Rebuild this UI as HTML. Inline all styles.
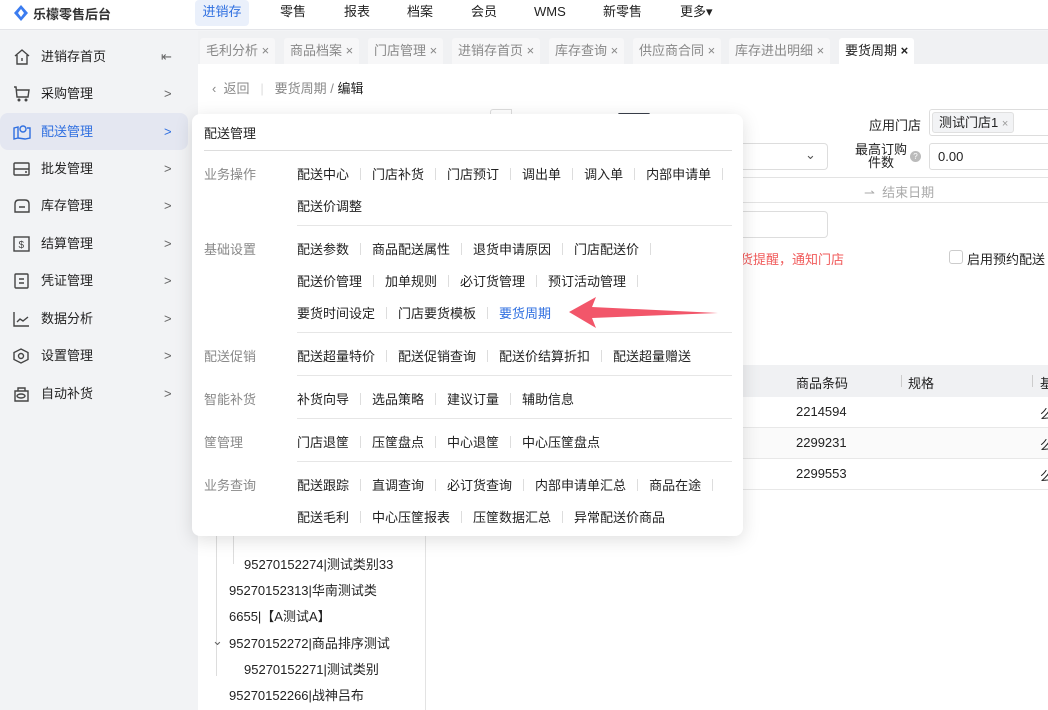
<!DOCTYPE html>
<html><head><meta charset="utf-8"><style>
*{margin:0;padding:0;box-sizing:border-box}
body{width:1048px;height:710px;overflow:hidden;background:#f3f4f6;font-family:"Liberation Sans","Noto Sans CJK SC",sans-serif;font-size:13px;color:#222;position:relative}
.abs{position:absolute}
.hdr{left:0;top:0;width:1048px;height:30px;background:#fff;border-bottom:1px solid #e3e4e8}
.nav{top:0;height:26px;line-height:24px;font-size:13px;color:#222}
.side{left:0;top:31px;width:198px;height:679px;background:#f2f3f5}
.si{left:0;width:188px;height:37px;line-height:37px;font-size:13px;color:#222}
.si .t{position:absolute;left:41px}
.si .ar{position:absolute;left:164px;color:#666;font-size:13px}
.si svg{position:absolute;left:13px;top:11px}
.tabs{left:198px;top:31px;width:850px;height:33px;background:#f0f1f3}
.tab{top:38px;height:26px;line-height:26px;background:#f7f7f8;color:#888;font-size:13px;padding:0 6px;border-radius:3px 3px 0 0}
.main{left:198px;top:64px;width:850px;height:646px;background:#fff}
.pop{left:192px;top:114px;width:551px;height:422px;background:#fff;border-radius:8px;box-shadow:0 4px 18px rgba(0,0,0,.13)}
.lab{left:12px;color:#888;font-size:13px}
.row{left:105px;font-size:13px;color:#222;white-space:nowrap}
.row span{display:inline-block}
.row i{display:inline-block;width:1px;height:12px;background:#ddd;margin:0 11px;vertical-align:-1px}
.sep{left:105px;width:435px;height:1px;background:#e6e6e6}
.tr{font-size:13px;color:#222;white-space:nowrap}
</style></head><body>
<div class="abs hdr"></div>
<svg class="abs" style="left:13px;top:4px" width="16" height="18" viewBox="0 0 16 18"><path d="M8 1 L15 9 L8 17 L1 9Z" fill="#3b7cf0"/><path d="M8 5 L11 9 L8 13 L5 9Z" fill="#fff"/></svg>
<div class="abs" style="left:33px;top:4px;font-size:13px;font-weight:bold;color:#333">乐檬零售后台</div>
<div class="abs nav" style="left:195px;width:54px;background:#eaf0fb;border-radius:4px;color:#2f6fe0;text-align:center">进销存</div>
<div class="abs nav" style="left:280px">零售</div>
<div class="abs nav" style="left:344px">报表</div>
<div class="abs nav" style="left:407px">档案</div>
<div class="abs nav" style="left:471px">会员</div>
<div class="abs nav" style="left:534px">WMS</div>
<div class="abs nav" style="left:603px">新零售</div>
<div class="abs nav" style="left:680px">更多▾</div>

<div class="abs side"></div>
<div class="abs si" style="top:38px"><svg width="18" height="16" viewBox="0 0 18 16" fill="none" stroke="#444" stroke-width="1.4"><path d="M2 7 L9 1 L16 7 M4 6 V15 H14 V6 M9 9 V12"/></svg><span class="t">进销存首页</span><span class="ar" style="left:161px">⇤</span></div>
<div class="abs si" style="top:75px"><svg width="18" height="16" viewBox="0 0 18 16" fill="none" stroke="#444" stroke-width="1.4"><path d="M1 1 H3 L4 11 H15 L16 4 H4"/><circle cx="6" cy="14" r=".8"/><circle cx="13" cy="14" r=".8"/></svg><span class="t">采购管理</span><span class="ar">&gt;</span></div>
<div class="abs si" style="top:113px;background:#e4e7f1;border-radius:8px;color:#2f6fe0"><svg width="18" height="16" viewBox="0 0 18 16" fill="none" stroke="#2f6fe0" stroke-width="1.4"><path d="M1 4 L5 3 V14 L1 15Z M5 14 L12 15 L17 14 V4 L14 4"/><circle cx="10" cy="5" r="3"/></svg><span class="t">配送管理</span><span class="ar" style="color:#2f6fe0">&gt;</span></div>
<div class="abs si" style="top:150px"><svg width="18" height="16" viewBox="0 0 18 16" fill="none" stroke="#444" stroke-width="1.4"><rect x="1" y="2" width="15" height="12" rx="1"/><path d="M1 8 H16 M12 11 H14"/></svg><span class="t">批发管理</span><span class="ar">&gt;</span></div>
<div class="abs si" style="top:187px"><svg width="18" height="16" viewBox="0 0 18 16" fill="none" stroke="#444" stroke-width="1.4"><path d="M2 6 Q2 2 6 2 H12 Q16 2 16 6 V14 H2Z M6 9 H12"/></svg><span class="t">库存管理</span><span class="ar">&gt;</span></div>
<div class="abs si" style="top:225px"><svg width="18" height="16" viewBox="0 0 18 16" fill="none" stroke="#444" stroke-width="1.4"><rect x="1" y="1" width="15" height="14"/><text x="5.5" y="12" font-size="10" fill="#444" stroke="none">$</text></svg><span class="t">结算管理</span><span class="ar">&gt;</span></div>
<div class="abs si" style="top:262px"><svg width="18" height="16" viewBox="0 0 18 16" fill="none" stroke="#444" stroke-width="1.4"><rect x="2" y="1" width="13" height="14" rx="1"/><path d="M6 6 H11 M6 10 H11"/></svg><span class="t">凭证管理</span><span class="ar">&gt;</span></div>
<div class="abs si" style="top:300px"><svg width="18" height="16" viewBox="0 0 18 16" fill="none" stroke="#444" stroke-width="1.4"><path d="M1 1 V15 H16 M4 11 L7 8 L10 10 L15 6"/></svg><span class="t">数据分析</span><span class="ar">&gt;</span></div>
<div class="abs si" style="top:337px"><svg width="18" height="16" viewBox="0 0 18 16" fill="none" stroke="#444" stroke-width="1.4"><path d="M8 1 L15 4.5 V11.5 L8 15 L1 11.5 V4.5Z"/><circle cx="8" cy="8" r="2.5"/></svg><span class="t">设置管理</span><span class="ar">&gt;</span></div>
<div class="abs si" style="top:375px"><svg width="18" height="16" viewBox="0 0 18 16" fill="none" stroke="#444" stroke-width="1.4"><path d="M5 5 V2 H12 V5 M2 5 H15 V15 H2Z"/><ellipse cx="8" cy="10" rx="4" ry="2"/></svg><span class="t">自动补货</span><span class="ar">&gt;</span></div>

<div class="abs tabs"></div>
<div class="abs tab" style="left:200px">毛利分析 ×</div>
<div class="abs tab" style="left:284px">商品档案 ×</div>
<div class="abs tab" style="left:368px">门店管理 ×</div>
<div class="abs tab" style="left:452px">进销存首页 ×</div>
<div class="abs tab" style="left:549px">库存查询 ×</div>
<div class="abs tab" style="left:633px">供应商合同 ×</div>
<div class="abs tab" style="left:729px">库存进出明细 ×</div>
<div class="abs tab" style="left:839px;background:#fff;color:#222">要货周期 <b>×</b></div>

<div class="abs main"></div>
<div class="abs" style="left:212px;top:78px;color:#888">‹ &nbsp;返回 &nbsp;&nbsp;<span style="color:#ddd">|</span>&nbsp;&nbsp; 要货周期 / <span style="color:#222">编辑</span></div>
<div class="abs" style="left:490px;top:109px;width:22px;height:8px;border:1px solid #ddd;border-bottom:none;border-radius:3px 0 0 0"></div>
<div class="abs" style="left:618px;top:113px;width:32px;height:3px;background:#3a3f4a;border-radius:2px"></div>
<div class="abs" style="left:869px;top:115px">应用门店</div>
<div class="abs" style="left:929px;top:109px;width:130px;height:27px;border:1px solid #ddd;border-radius:3px"></div>
<div class="abs" style="left:932px;top:112px;width:82px;height:21px;background:#f2f3f5;border:1px solid #e0e0e0;border-radius:3px;padding-left:6px;line-height:20px">测试门店1 <span style="color:#999;font-size:11px">×</span></div>
<div class="abs" style="left:640px;top:143px;width:188px;height:27px;border:1px solid #ddd;border-left:none;border-radius:0 4px 4px 0"></div>
<div class="abs" style="left:805px;top:147px;color:#555">⌄</div>
<div class="abs" style="left:855px;top:143px;line-height:13px;text-align:center">最高订购<br>件数</div>
<div class="abs" style="left:910px;top:151px;width:11px;height:11px;border-radius:50%;background:#bbb;color:#fff;font-size:8px;text-align:center;line-height:11px">?</div>
<div class="abs" style="left:929px;top:143px;width:130px;height:27px;border:1px solid #ddd;border-radius:3px;padding-left:8px;line-height:25px">0.00</div>
<div class="abs" style="left:640px;top:177px;width:410px;height:1px;background:#e3e3e3"></div>
<div class="abs" style="left:640px;top:202px;width:410px;height:1px;background:#e3e3e3"></div>
<div class="abs" style="left:864px;top:182px;color:#aaa">⇀ &nbsp;结束日期</div>
<div class="abs" style="left:640px;top:211px;width:188px;height:27px;border:1px solid #ddd;border-left:none;border-radius:0 4px 4px 0"></div>
<div class="abs" style="left:740px;top:249px;color:#f05a5a">货提醒，通知门店</div>
<div class="abs" style="left:949px;top:250px;width:14px;height:14px;border:1px solid #ccc;border-radius:3px"></div>
<div class="abs" style="left:967px;top:249px">启用预约配送</div>

<div class="abs" style="left:440px;top:365px;width:608px;height:32px;background:#f0f1f3"></div>
<div class="abs" style="left:796px;top:373px">商品条码</div>
<div class="abs" style="left:901px;top:375px;width:1px;height:12px;background:#ccc"></div>
<div class="abs" style="left:908px;top:373px">规格</div>
<div class="abs" style="left:1032px;top:375px;width:1px;height:12px;background:#ccc"></div>
<div class="abs" style="left:1040px;top:373px">基</div>
<div class="abs" style="left:440px;top:427px;width:608px;height:1px;background:#e8e8e8"></div>
<div class="abs" style="left:440px;top:428px;width:608px;height:30px;background:#fafafa"></div>
<div class="abs" style="left:440px;top:458px;width:608px;height:1px;background:#e8e8e8"></div>
<div class="abs" style="left:440px;top:489px;width:608px;height:1px;background:#e8e8e8"></div>
<div class="abs" style="left:796px;top:404px">2214594</div>
<div class="abs" style="left:796px;top:435px">2299231</div>
<div class="abs" style="left:796px;top:466px">2299553</div>
<div class="abs" style="left:1040px;top:404px">么</div>
<div class="abs" style="left:1040px;top:435px">么</div>
<div class="abs" style="left:1040px;top:466px">么</div>

<div class="abs" style="left:425px;top:536px;width:1px;height:174px;background:#e3e3e3"></div>
<div class="abs" style="left:216px;top:536px;width:1px;height:140px;background:#ddd"></div>
<div class="abs" style="left:233px;top:536px;width:1px;height:28px;background:#ddd"></div>
<div class="abs tr" style="left:244px;top:554px">95270152274|测试类别33</div>
<div class="abs tr" style="left:229px;top:580px">95270152313|华南测试类</div>
<div class="abs tr" style="left:229px;top:606px">6655|【A测试A】</div>
<div class="abs tr" style="left:212px;top:633px;color:#666">⌄</div>
<div class="abs tr" style="left:229px;top:633px">95270152272|商品排序测试</div>
<div class="abs tr" style="left:244px;top:659px">95270152271|测试类别</div>
<div class="abs tr" style="left:229px;top:685px">95270152266|战神吕布</div>

<div class="abs pop">
<div class="abs" style="left:12px;top:9px;font-size:13px;color:#222">配送管理</div>
<div class="abs" style="left:12px;top:36px;width:528px;height:1px;background:#ddd"></div>
<div class="abs lab" style="top:50px">业务操作</div>
<div class="abs row" style="top:50px"><span>配送中心</span><i></i><span>门店补货</span><i></i><span>门店预订</span><i></i><span>调出单</span><i></i><span>调入单</span><i></i><span>内部申请单</span><i></i></div>
<div class="abs row" style="top:82px"><span>配送价调整</span></div>
<div class="abs sep" style="top:111px"></div>
<div class="abs lab" style="top:125px">基础设置</div>
<div class="abs row" style="top:125px"><span>配送参数</span><i></i><span>商品配送属性</span><i></i><span>退货申请原因</span><i></i><span>门店配送价</span><i></i></div>
<div class="abs row" style="top:157px"><span>配送价管理</span><i></i><span>加单规则</span><i></i><span>必订货管理</span><i></i><span>预订活动管理</span><i></i></div>
<div class="abs row" style="top:189px"><span>要货时间设定</span><i></i><span>门店要货模板</span><i></i><span style="color:#2f6fe0">要货周期</span></div>
<div class="abs sep" style="top:218px"></div>
<div class="abs lab" style="top:232px">配送促销</div>
<div class="abs row" style="top:232px"><span>配送超量特价</span><i></i><span>配送促销查询</span><i></i><span>配送价结算折扣</span><i></i><span>配送超量赠送</span></div>
<div class="abs sep" style="top:261px"></div>
<div class="abs lab" style="top:275px">智能补货</div>
<div class="abs row" style="top:275px"><span>补货向导</span><i></i><span>选品策略</span><i></i><span>建议订量</span><i></i><span>辅助信息</span></div>
<div class="abs sep" style="top:304px"></div>
<div class="abs lab" style="top:318px">筐管理</div>
<div class="abs row" style="top:318px"><span>门店退筐</span><i></i><span>压筐盘点</span><i></i><span>中心退筐</span><i></i><span>中心压筐盘点</span></div>
<div class="abs sep" style="top:347px"></div>
<div class="abs lab" style="top:361px">业务查询</div>
<div class="abs row" style="top:361px"><span>配送跟踪</span><i></i><span>直调查询</span><i></i><span>必订货查询</span><i></i><span>内部申请单汇总</span><i></i><span>商品在途</span><i></i></div>
<div class="abs row" style="top:393px"><span>配送毛利</span><i></i><span>中心压筐报表</span><i></i><span>压筐数据汇总</span><i></i><span>异常配送价商品</span></div>
</div>
<svg class="abs" style="left:0;top:0" width="1048" height="710"><polygon points="569,312 596,297 592,307 718,313 592,318 596,328" fill="#f2566a"/></svg>
</body></html>
